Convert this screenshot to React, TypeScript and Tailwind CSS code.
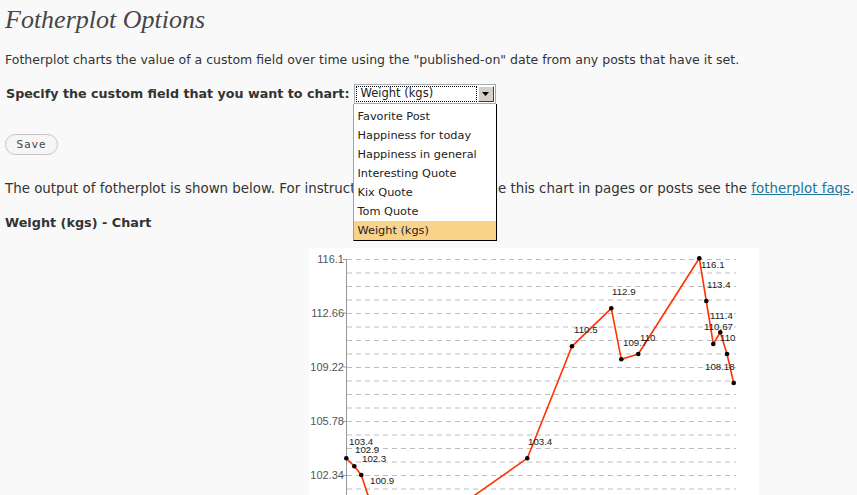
import React from "react";

const body = { fontFamily: '"DejaVu Sans", Verdana, sans-serif' };

const pts: [number, number][] = [
  [346.3, 458.3],
  [354.3, 466.3],
  [361.3, 475],
  [368.5, 497],
  [380, 530],
  [460, 505.5],
  [527.3, 458.3],
  [572, 346.3],
  [611.3, 308.3],
  [621.3, 359.3],
  [638.3, 354],
  [699.3, 258.3],
  [706.3, 301],
  [713.3, 344],
  [720.3, 332.3],
  [727, 354],
  [733.7, 383],
];
const dots = [0, 1, 2, 3, 6, 7, 8, 9, 10, 11, 12, 13, 14, 15, 16];

const labels: [string, number, number][] = [
  ["103.4", 349, 441],
  ["102.9", 355, 449],
  ["102.3", 362, 458],
  ["100.9", 370, 480],
  ["103.4", 528, 441],
  ["110.5", 574, 329],
  ["112.9", 612, 291],
  ["109.7", 623, 342],
  ["110", 640, 337],
  ["116.1", 701, 264],
  ["113.4", 707, 284],
  ["111.4", 710, 315],
  ["110.67", 704, 326],
  ["110", 720, 337],
  ["108.18", 705, 366],
];

const axis: [string, number][] = [
  ["116.1", 259],
  ["112.66", 312.5],
  ["109.22", 366.5],
  ["105.78", 421],
  ["102.34", 475],
];

function Chart() {
  const ox = 309;
  const oy = 248;
  const grid = Array.from({ length: 18 }, (_, i) => 259 + i * 13.5);
  return (
    <svg width="450" height="260" className="block" style={{ fontFamily: '"Liberation Sans", Arial, sans-serif' }}>
      <rect x="0" y="0" width="450" height="260" fill="#ffffff" />
      {grid.map((g, i) => (
        <line key={i} x1={347 - ox} x2={736 - ox} y1={g - oy + 0.5} y2={g - oy + 0.5} stroke="#bdbdbd" strokeWidth="1" strokeDasharray="5 4" />
      ))}
      <line x1={346.5 - ox} x2={346.5 - ox} y1={259 - oy} y2={260} stroke="#999" strokeWidth="1" />
      {axis.map(([t, y]) => (
        <g key={t}>
          <line x1={343 - ox} x2={347 - ox} y1={y - oy + 0.5} y2={y - oy + 0.5} stroke="#999" />
          <text x={344 - ox} y={y - oy + 4} fontSize="11" fill="#555" textAnchor="end">{t}</text>
        </g>
      ))}
      <polyline points={pts.map(([x, y]) => `${x - ox},${y - oy}`).join(" ")} fill="none" stroke="#ff3300" strokeWidth="1.6" />
      {dots.map((i) => (
        <circle key={i} cx={pts[i][0] - ox} cy={pts[i][1] - oy} r="2.3" fill="#000" />
      ))}
      {labels.map(([t, x, y], i) => (
        <text key={i} x={x - ox} y={y - oy + 3.5} fontSize="9.7" fill="#1a1a1a">{t}</text>
      ))}
    </svg>
  );
}

const options = [
  "Favorite Post",
  "Happiness for today",
  "Happiness in general",
  "Interesting Quote",
  "Kix Quote",
  "Tom Quote",
  "Weight (kgs)",
];

export default function App() {
  return (
    <div className="h-[495px] w-[857px] overflow-hidden bg-[#f9f9f9] text-[#333]" style={body}>
      <div className="relative pl-[5px]">
        <h2
          className="mt-[4px] h-[32px] text-[26px] leading-[32px] italic text-[#464646]"
          style={{ fontFamily: '"Liberation Serif", Georgia, serif' }}
        >
          Fotherplot Options
        </h2>
        <p className="mt-[15px] text-[12.5px] leading-[18px]">
          Fotherplot charts the value of a custom field over time using the "published-on" date from any posts that have it set.
        </p>
        <div className="mt-[15px] flex h-[20px] items-center">
          <span className="ml-[1px] text-[12.7px] font-bold leading-[18px]">Specify the custom field that you want to chart:</span>
          <div className="relative ml-[4px] h-[20px] w-[142px]">
            <div className="flex h-[20px] w-[142px] items-center border border-[#a5acb2] bg-white p-[1px]">
              <div className="flex h-full flex-1 items-center border border-dotted border-black pl-[4px] text-[11.5px] text-[#222]">
                Weight (kgs)
              </div>
              <div className="ml-[1px] flex h-full w-[16px] items-center justify-center border border-t-white border-l-white border-r-[#404040] border-b-[#404040] bg-[#d4d0c8]">
                <svg width="7" height="4" viewBox="0 0 7 4">
                  <polygon points="0,0 7,0 3.5,4" fill="#000" />
                </svg>
              </div>
            </div>
            <div className="absolute left-[-1px] top-[20px] z-10 w-[144px] border-b border-l border-r border-b-black border-l-[#a0a0a0] border-r-black bg-white pt-[3px]">
              {options.map((o) => (
                <div
                  key={o}
                  className={
                    "h-[19px] pl-[4px] text-[11.3px] leading-[19px] text-[#222] " +
                    (o === "Weight (kgs)" ? "bg-[#fad38a]" : "")
                  }
                >
                  {o}
                </div>
              ))}
            </div>
          </div>
        </div>
        <button className="mt-[30px] block h-[21px] w-[53px] rounded-full border border-[#c4c4c4] bg-[#f6f6f6] text-[10.5px] tracking-[1px] text-[#464646]">
          Save
        </button>
        <p className="mt-[25px] whitespace-nowrap text-[13.4px] leading-[18px]">
          The output of fotherplot is shown below. For instructions on how to include this chart in pages or posts see the{" "}
          <a className="text-[#21759b] underline">fotherplot faqs</a>.
        </p>
        <h3 className="mt-[16px] text-[12.8px] font-bold leading-[18px]">Weight (kgs) - Chart</h3>
        <div className="ml-[304px] mt-[16px]">
          <Chart />
        </div>
      </div>
    </div>
  );
}
